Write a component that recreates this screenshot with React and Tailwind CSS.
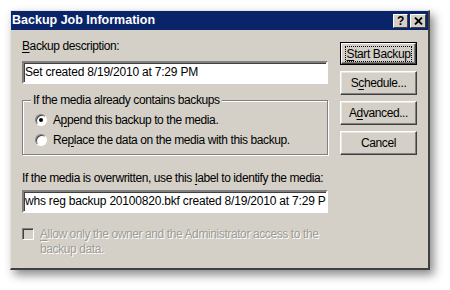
const font = { fontFamily: '"Liberation Sans", Arial, sans-serif' }

function U({ children }) {
  return <span className="underline underline-offset-[2px]">{children}</span>
}

function TextBox({ value }) {
  return (
    <div className="h-[23px] w-[306px] overflow-hidden whitespace-nowrap border-2 border-t-[#808080] border-l-[#808080] border-b-white border-r-white bg-white pl-[1px] leading-[19px] tracking-[-0.2px] text-black shadow-[inset_1px_1px_0_#404040]">
      {value}
    </div>
  )
}

function Btn({ children, isDefault }) {
  if (isDefault) {
    return (
      <div className="h-[23px] w-[77px] border border-black">
        <div className="flex h-full w-full items-center justify-center border border-t-white border-l-white border-b-[#404040] border-r-[#404040] shadow-[inset_-1px_-1px_0_#808080]">
          <span className="whitespace-nowrap border border-dotted border-black px-[1px] leading-[14px]">{children}</span>
        </div>
      </div>
    )
  }
  return (
    <div className="flex h-[24px] w-[77px] items-center justify-center whitespace-nowrap border border-t-white border-l-white border-b-[#404040] border-r-[#404040] shadow-[inset_-1px_-1px_0_#808080,inset_1px_1px_0_#e8e6e0]">
      <span>{children}</span>
    </div>
  )
}

function Radio({ checked }) {
  return (
    <span className="relative flex h-[12px] w-[12px] shrink-0 items-center justify-center rounded-full border border-t-[#808080] border-l-[#808080] border-b-white border-r-white bg-white shadow-[inset_1px_1px_0_#404040]">
      {checked && <span className="h-[4px] w-[4px] rounded-full bg-black" />}
    </span>
  )
}

export default function App() {
  return (
    <div className="h-[290px] w-[450px] overflow-hidden bg-white pl-[10px] pt-[10px] text-[12px] tracking-[-0.4px] text-black" style={font}>
      <div className="flex h-[260px] w-[420px] flex-col border-l border-t border-r-2 border-b-2 border-l-[#e6e4de] border-t-[#e6e4de] border-r-[#404040] border-b-[#404040] bg-[#d4d0c8] shadow-[4px_5px_9px_rgba(0,0,0,0.45)]">
        <div className="flex h-[19px] shrink-0 items-center justify-between bg-[#0a246a] pl-[1px] pr-[2px]">
          <span className="text-[12.5px] font-bold leading-[19px] tracking-normal text-white">Backup Job Information</span>
          <div className="flex gap-[2px]">
            <div className="flex h-[14px] w-[15px] items-center justify-center border border-t-white border-l-white border-b-[#404040] border-r-[#404040] bg-[#d4d0c8] text-[12px] font-bold leading-none">?</div>
            <div className="flex h-[14px] w-[16px] items-center justify-center border border-t-white border-l-white border-b-[#404040] border-r-[#404040] bg-[#d4d0c8]">
              <svg width="9" height="8" viewBox="0 0 9 8">
                <path d="M1 0.5 L8 7.5 M8 0.5 L1 7.5" stroke="#000" strokeWidth="1.8" />
              </svg>
            </div>
          </div>
        </div>

        <div className="flex flex-1 pl-[11px]">
          <div className="flex w-[306px] flex-col pt-[8px]">
            <div className="h-[16px] leading-[16px]"><U>B</U>ackup description:</div>
            <div className="mt-[7px]">
              <TextBox value="Set created 8/19/2010 at 7:29 PM" />
            </div>

            <fieldset className="mt-[9px] h-[62px] w-[306px] border border-[#808080] pl-[12px] shadow-[inset_1px_1px_0_#fff,1px_1px_0_#fff]">
              <legend className="ml-[-4px] bg-[#d4d0c8] px-[2px] leading-[14px]">If the media already contains backups</legend>
              <div className="mt-[5px] flex flex-col gap-[5px]">
                <div className="flex h-[15px] items-center gap-[6px]">
                  <Radio checked />
                  <span>A<U>p</U>pend this backup to the media.</span>
                </div>
                <div className="flex h-[15px] items-center gap-[6px]">
                  <Radio />
                  <span>Re<U>p</U>lace the data on the media with this backup.</span>
                </div>
              </div>
            </fieldset>

            <div className="mt-[15px] h-[16px] whitespace-nowrap leading-[16px]">If the media is overwritten, use this <U>l</U>abel to identify the media:</div>
            <div className="mt-[4px]">
              <TextBox value="whs reg backup 20100820.bkf created 8/19/2010 at 7:29 PM" />
            </div>

            <div className="mt-[14px] flex gap-[6px]">
              <span className="mt-[1px] h-[12px] w-[12px] shrink-0 border border-t-[#808080] border-l-[#808080] border-b-white border-r-white bg-[#d4d0c8] shadow-[inset_1px_1px_0_#404040]" />
              <span className="w-[282px] leading-[15px] text-[#9e9c96] [text-shadow:1px_1px_0_#fff]">
                <U>A</U>llow only the owner and the Administrator access to the backup data.
              </span>
            </div>
          </div>

          <div className="ml-[12px] flex flex-col gap-[6px] pt-[12px]">
            <Btn isDefault><U>S</U>tart Backup</Btn>
            <Btn>S<U>c</U>hedule...</Btn>
            <Btn>A<U>d</U>vanced...</Btn>
            <Btn>Cancel</Btn>
          </div>
        </div>
      </div>
    </div>
  )
}
